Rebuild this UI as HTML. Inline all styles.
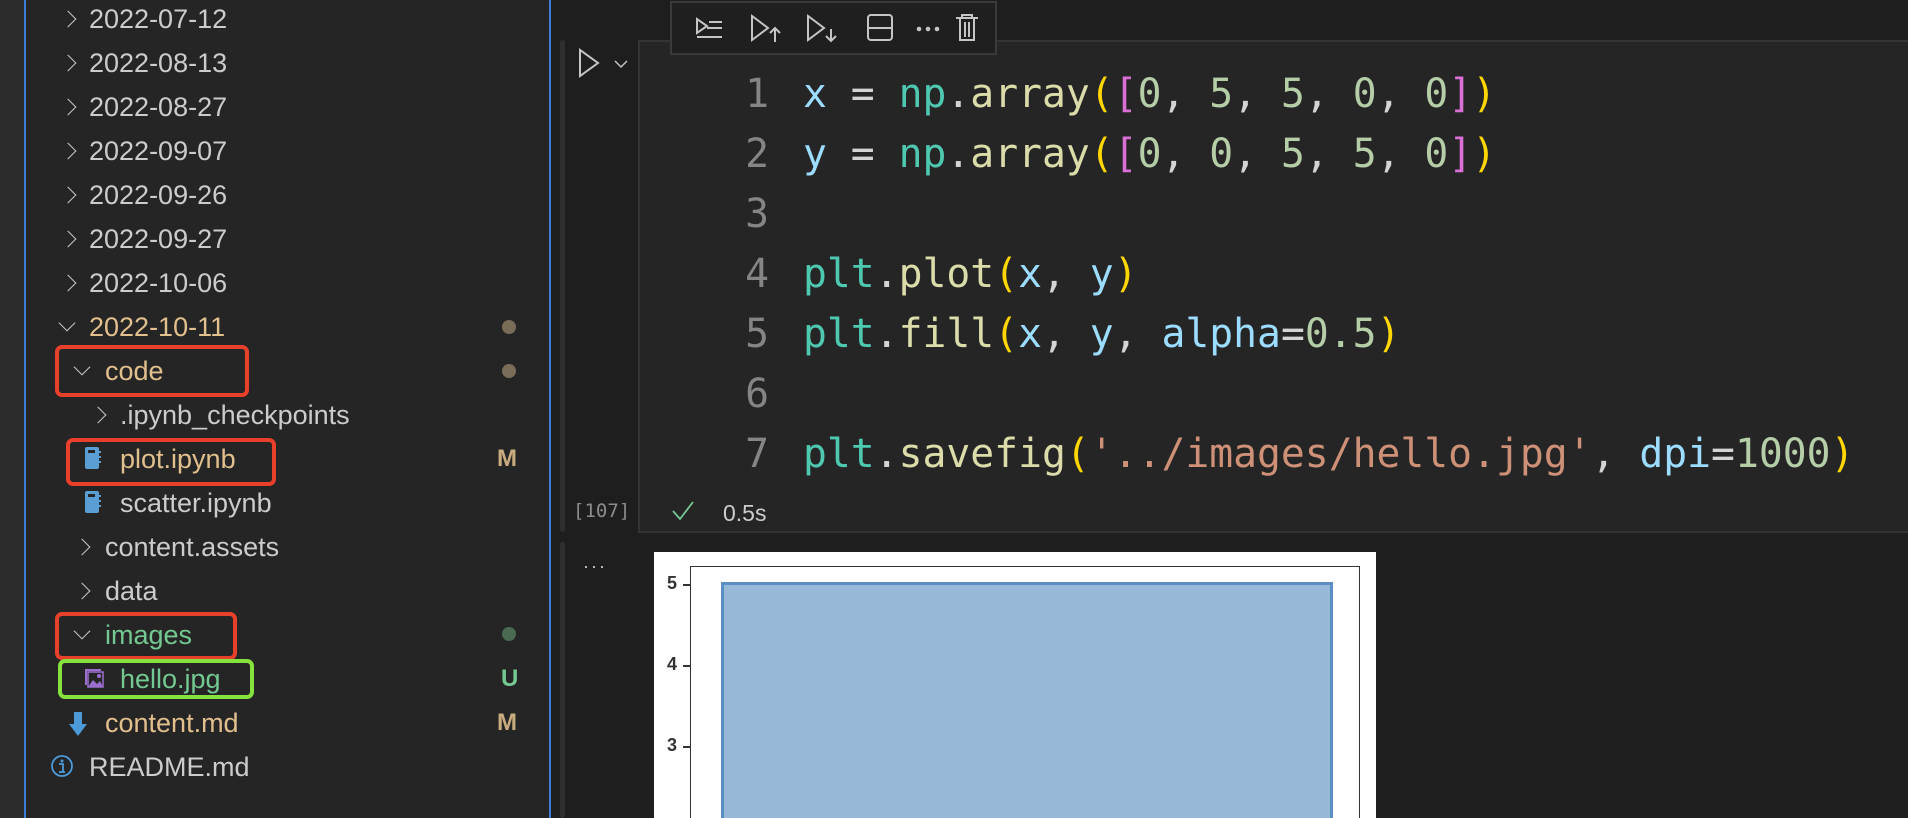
<!DOCTYPE html>
<html><head><meta charset="utf-8"><style>
*{margin:0;padding:0;box-sizing:border-box}
body{width:1908px;height:818px;overflow:hidden;background:#1e1e1e;position:relative;font-family:"Liberation Sans",sans-serif}
.abs{position:absolute}
#strip{left:0;top:0;width:24px;height:818px;background:#2c2c2c}
#side{left:24px;top:0;width:527px;height:818px;background:#252526;border-left:2px solid #3b7fd4;border-right:2px solid #3b7fd4}
.row{position:absolute;font-size:27px;color:#cccccc;line-height:30px;white-space:nowrap}
.chev{position:absolute;width:12px;height:12px;border-right:1.8px solid #c5c5c5;border-bottom:1.8px solid #c5c5c5}
.r{transform:rotate(-45deg)}
.d{transform:rotate(45deg)}
.dot{position:absolute;width:14px;height:14px;border-radius:50%}
.badge{position:absolute;font-size:24px;font-weight:bold;line-height:30px}
.box{position:absolute;border:4px solid #e8402b;border-radius:7px}
.code{position:absolute;font-family:"DejaVu Sans Mono","Liberation Mono",monospace;font-size:39.7px;line-height:60px;white-space:pre;color:#d4d4d4}
.ln{position:absolute;font-family:"DejaVu Sans Mono",monospace;font-size:39.7px;line-height:60px;color:#858585;text-align:right;width:60px}
.v{color:#9cdcfe}.g{color:#4ec9b0}.f{color:#dcdcaa}.y{color:#ffd700}.p{color:#da70d6}.n{color:#b5cea8}.s{color:#ce9178}
</style></head><body>
<div id="strip" class="abs"></div>
<div id="side" class="abs"></div>

<div class="chev r" style="left:62px;top:13px"></div><div class="row" style="left:89px;top:4px">2022-07-12</div>
<div class="chev r" style="left:62px;top:57px"></div><div class="row" style="left:89px;top:48px">2022-08-13</div>
<div class="chev r" style="left:62px;top:101px"></div><div class="row" style="left:89px;top:92px">2022-08-27</div>
<div class="chev r" style="left:62px;top:145px"></div><div class="row" style="left:89px;top:136px">2022-09-07</div>
<div class="chev r" style="left:62px;top:189px"></div><div class="row" style="left:89px;top:180px">2022-09-26</div>
<div class="chev r" style="left:62px;top:233px"></div><div class="row" style="left:89px;top:224px">2022-09-27</div>
<div class="chev r" style="left:62px;top:277px"></div><div class="row" style="left:89px;top:268px">2022-10-06</div>
<div class="chev d" style="left:61px;top:317px"></div><div class="row" style="left:89px;top:312px;color:#e2c08d">2022-10-11</div>
<div class="dot" style="left:502px;top:320px;background:#7a6d58"></div>
<div class="chev d" style="left:76px;top:361px"></div><div class="row" style="left:105px;top:356px;color:#e2c08d">code</div>
<div class="dot" style="left:502px;top:364px;background:#7a6d58"></div>
<div class="chev r" style="left:92px;top:409px"></div><div class="row" style="left:120px;top:400px">.ipynb_checkpoints</div>
<svg class="abs" style="left:84px;top:446px" width="18" height="24"><rect x="1" y="1" width="14" height="22" rx="2" fill="#5a9fd4"/><rect x="4" y="4" width="7" height="3" fill="#252526"/><rect x="15" y="5" width="2" height="2" fill="#5a9fd4"/><rect x="15" y="10" width="2" height="2" fill="#5a9fd4"/><rect x="15" y="15" width="2" height="2" fill="#5a9fd4"/></svg>
<div class="row" style="left:120px;top:444px;color:#e2c08d">plot.ipynb</div>
<div class="badge" style="left:497px;top:444px;color:#c9ad7f">M</div>
<svg class="abs" style="left:84px;top:490px" width="18" height="24"><rect x="1" y="1" width="14" height="22" rx="2" fill="#5a9fd4"/><rect x="4" y="4" width="7" height="3" fill="#252526"/><rect x="15" y="5" width="2" height="2" fill="#5a9fd4"/><rect x="15" y="10" width="2" height="2" fill="#5a9fd4"/><rect x="15" y="15" width="2" height="2" fill="#5a9fd4"/></svg>
<div class="row" style="left:120px;top:488px">scatter.ipynb</div>
<div class="chev r" style="left:76px;top:541px"></div><div class="row" style="left:105px;top:532px">content.assets</div>
<div class="chev r" style="left:76px;top:585px"></div><div class="row" style="left:105px;top:576px">data</div>
<div class="chev d" style="left:76px;top:625px"></div><div class="row" style="left:105px;top:620px;color:#73c991">images</div>
<div class="dot" style="left:502px;top:627px;background:#4a6a52"></div>
<svg class="abs" style="left:83px;top:667px" width="22" height="22"><path d="M2 2h16v2H4v14H2z" fill="#9b6fd0"/><rect x="5" y="5" width="15" height="15" fill="none" stroke="#9b6fd0" stroke-width="1.5"/><path d="M5 20l5-7 4 4 3-3 3 6z" fill="#9b6fd0"/><circle cx="16" cy="9" r="2" fill="#9b6fd0"/></svg>
<div class="row" style="left:120px;top:664px;color:#73c991">hello.jpg</div>
<div class="badge" style="left:501px;top:664px;color:#73c991">U</div>
<svg class="abs" style="left:68px;top:711px" width="20" height="26"><path d="M6 1h8v12h5L10 25 1 13h5z" fill="#4d9ad8"/></svg>
<div class="row" style="left:105px;top:708px;color:#e2c08d">content.md</div>
<div class="badge" style="left:497px;top:708px;color:#c9ad7f">M</div>
<svg class="abs" style="left:50px;top:754px" width="24" height="24"><circle cx="12" cy="12" r="10" fill="none" stroke="#4d9ad8" stroke-width="1.8"/><circle cx="12" cy="7" r="1.5" fill="#4d9ad8"/><path d="M9 10h4v8h2M9 18h6" stroke="#4d9ad8" stroke-width="1.8" fill="none"/></svg>
<div class="row" style="left:89px;top:752px">README.md</div>

<div class="box" style="left:55px;top:345px;width:194px;height:52px"></div>
<div class="box" style="left:66px;top:438px;width:210px;height:48px"></div>
<div class="box" style="left:55px;top:612px;width:182px;height:48px"></div>
<div class="box" style="left:58px;top:659px;width:196px;height:40px;border-color:#86e23c"></div>

<div class="abs" style="left:560px;top:40px;width:5px;height:492px;background:#2f2f31;border-radius:3px"></div>
<div class="abs" style="left:560px;top:542px;width:5px;height:276px;background:#2f2f31;border-radius:3px"></div>
<svg class="abs" style="left:578px;top:48px" width="60" height="30"><path d="M2 2v26l18-13z" fill="none" stroke="#c5c5c5" stroke-width="2"/><path d="M37 13l6 6 6-6" fill="none" stroke="#c5c5c5" stroke-width="1.5"/></svg>
<div class="abs" style="left:638px;top:40px;width:1270px;height:493px;background:#252526;border:2px solid #343438;border-right:none"></div>
<div class="abs" style="left:670px;top:1px;width:327px;height:54px;background:#1f1f1f;border:2px solid #3a3a3c"></div>
<svg class="abs" style="left:670px;top:1px" width="327" height="54" fill="none" stroke="#c5c5c5" stroke-width="2">
<path d="M27 18v14l10-7z M39 21h13M37 27h15M27 36h25"/>
<path d="M82 15v24l16-12z M100 32l5-5 5 5M105 27v14"/>
<path d="M138 15v24l16-12z M156 35l5 5 5-5M161 40v-12"/>
<rect x="198" y="14" width="24" height="25" rx="3"/><path d="M198 27h24"/>
<circle cx="249" cy="28" r="1.3" fill="#c5c5c5"/><circle cx="258" cy="28" r="1.3" fill="#c5c5c5"/><circle cx="267" cy="28" r="1.3" fill="#c5c5c5"/>
<path d="M286 17h22M292 17v-3h10v3M290 17v22h14V17M295 21v15M299 21v15"/>
</svg>

<div class="ln" style="left:709px;top:64px">1<br>2<br>3<br>4<br>5<br>6<br>7</div>
<div class="code" style="left:803px;top:64px"><span class="v">x</span> = <span class="g">np</span>.<span class="f">array</span><span class="y">(</span><span class="p">[</span><span class="n">0</span>, <span class="n">5</span>, <span class="n">5</span>, <span class="n">0</span>, <span class="n">0</span><span class="p">]</span><span class="y">)</span>
<span class="v">y</span> = <span class="g">np</span>.<span class="f">array</span><span class="y">(</span><span class="p">[</span><span class="n">0</span>, <span class="n">0</span>, <span class="n">5</span>, <span class="n">5</span>, <span class="n">0</span><span class="p">]</span><span class="y">)</span>

<span class="g">plt</span>.<span class="f">plot</span><span class="y">(</span><span class="v">x</span>, <span class="v">y</span><span class="y">)</span>
<span class="g">plt</span>.<span class="f">fill</span><span class="y">(</span><span class="v">x</span>, <span class="v">y</span>, <span class="v">alpha</span>=<span class="n">0.5</span><span class="y">)</span>

<span class="g">plt</span>.<span class="f">savefig</span><span class="y">(</span><span class="s">'../images/hello.jpg'</span>, <span class="v">dpi</span>=<span class="n">1000</span><span class="y">)</span></div>

<div class="abs" style="left:573px;top:500px;font-family:'DejaVu Sans Mono',monospace;font-size:19px;color:#8b8b8b">[107]</div>
<svg class="abs" style="left:671px;top:500px" width="24" height="22"><path d="M2 11l7 8L22 2" fill="none" stroke="#73c991" stroke-width="1.8"/></svg>
<div class="abs" style="left:723px;top:500px;font-size:23px;color:#cccccc">0.5s</div>

<div class="abs" style="left:583px;top:556px;font-size:18px;color:#cccccc;letter-spacing:2px">···</div>
<div class="abs" style="left:654px;top:552px;width:722px;height:266px;background:#fff"></div>
<div class="abs" style="left:690px;top:566px;width:670px;height:252px;border:1.5px solid #333;border-bottom:none"></div>
<div class="abs" style="left:721px;top:582px;width:612px;height:236px;background:#97b8d6;border:3px solid #5b8ec2;border-bottom:none"></div>
<div class="abs" style="left:667px;top:573px;font-size:18px;font-weight:bold;color:#333">5</div>
<div class="abs" style="left:667px;top:654px;font-size:18px;font-weight:bold;color:#333">4</div>
<div class="abs" style="left:667px;top:735px;font-size:18px;font-weight:bold;color:#333">3</div>
<div class="abs" style="left:683px;top:584px;width:7px;height:2px;background:#333"></div>
<div class="abs" style="left:683px;top:665px;width:7px;height:2px;background:#333"></div>
<div class="abs" style="left:683px;top:746px;width:7px;height:2px;background:#333"></div>
</body></html>
